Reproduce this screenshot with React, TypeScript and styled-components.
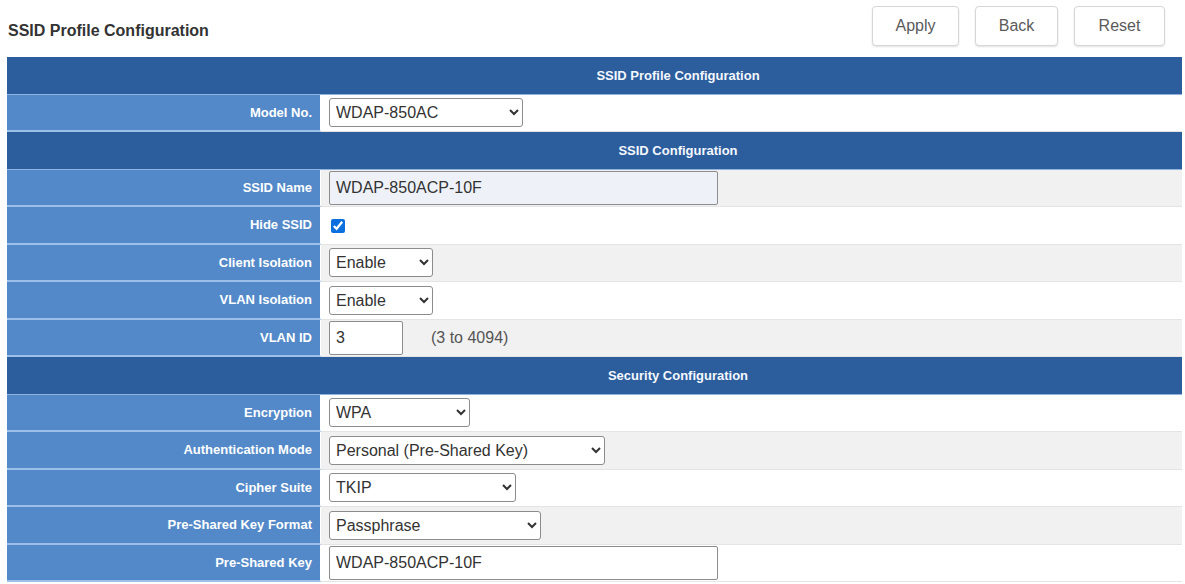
import styled, { createGlobalStyle } from "styled-components";

const GlobalStyle = createGlobalStyle`
    html, body {
        margin: 0;
        padding: 0;
        overflow: hidden;
        background: #ffffff;
    }
    body {
        font-family: "Liberation Sans", Arial, sans-serif;
    }
`

const Page = styled.div`
    padding-left: 7px;
    width: 1175px;
`

const TopBar = styled.div`
    display: flex;
    justify-content: space-between;
    align-items: flex-start;
    width: 1158px;
    height: 57px;
    box-sizing: border-box;
    padding-top: 6px;
`

const Title = styled.h1`
    margin: 16px 0 0 1px;
    font-size: 16px;
    font-weight: bold;
    color: #333333;
`

const Buttons = styled.div`
    display: flex;
    gap: 16px;
`

const Button = styled.button<{ $w: number }>`
    width: ${p => p.$w}px;
    height: 40px;
    background: #ffffff;
    border: 1px solid #d6d6d6;
    border-radius: 4px;
    box-shadow: 0 1px 2px rgba(0, 0, 0, 0.12);
    font-family: "Liberation Sans", Arial, sans-serif;
    font-size: 16px;
    color: #5a5a5a;
    cursor: pointer;
`

const Table = styled.table`
    width: 1175px;
    border-collapse: separate;
    border-spacing: 0;
    table-layout: fixed;
`

/* the heading text sits right of centre in the original page */
const HeadCell = styled.td`
    height: 37.5px;
    box-sizing: border-box;
    background: #2c5d9c;
    border-bottom: 1px solid #8fb2df;
    padding-left: 168px;
    color: #f4f8ff;
    font-size: 13px;
    font-weight: bold;
    text-align: center;
`

const LabelCell = styled.td`
    height: 37.5px;
    box-sizing: border-box;
    background: #5389c9;
    border-bottom: 2px solid #9cc0ea;
    border-right: 1px solid #ffffff;
    padding-right: 8px;
    color: #ffffff;
    font-size: 13px;
    font-weight: bold;
    text-align: right;
    white-space: nowrap;
`

const ValueCell = styled.td<{ $alt: boolean }>`
    height: 37.5px;
    box-sizing: border-box;
    background: ${p => (p.$alt ? "#f1f1f1" : "#ffffff")};
    border-bottom: 1px solid #e4e4e4;
    padding: 0 8px;
`

const Select = styled.select<{ $w: number }>`
    width: ${p => p.$w}px;
    height: 29px;
    border: 1px solid #8c8c8c;
    border-radius: 3px;
    background: #ffffff;
    padding: 0 2px;
    font-family: "Liberation Sans", Arial, sans-serif;
    font-size: 16px;
    color: #333333;
    vertical-align: middle;
`

const TextInput = styled.input<{ $w: number; $tint?: boolean }>`
    width: ${p => p.$w}px;
    height: 34px;
    box-sizing: border-box;
    border: 1px solid #8c8c8c;
    border-radius: 2px;
    background: ${p => (p.$tint ? "#eef2f8" : "#ffffff")};
    padding: 0 6px;
    font-family: "Liberation Sans", Arial, sans-serif;
    font-size: 16px;
    color: #333333;
    vertical-align: middle;
`

const Check = styled.input`
    width: 14px;
    height: 14px;
    margin: 0 0 0 2px;
    vertical-align: middle;
    accent-color: #0b6fde;
`

const Hint = styled.span`
    margin-left: 28px;
    font-size: 16px;
    color: #555555;
    vertical-align: middle;
`

type Row = { label: string; field: React.ReactNode };
type Section = { title: string; rows: Row[] };

const sel = (w: number, value: string) => (
    <Select $w={w} defaultValue={value}>
        <option>{value}</option>
    </Select>
);

const sections: Section[] = [
    {
        title: "SSID Profile Configuration",
        rows: [{ label: "Model No.", field: sel(194, "WDAP-850AC") }],
    },
    {
        title: "SSID Configuration",
        rows: [
            { label: "SSID Name", field: <TextInput $w={389} $tint defaultValue="WDAP-850ACP-10F" /> },
            { label: "Hide SSID", field: <Check type="checkbox" defaultChecked /> },
            { label: "Client Isolation", field: sel(104, "Enable") },
            { label: "VLAN Isolation", field: sel(104, "Enable") },
            {
                label: "VLAN ID",
                field: (
                    <>
                        <TextInput $w={74} defaultValue="3" />
                        <Hint>(3 to 4094)</Hint>
                    </>
                ),
            },
        ],
    },
    {
        title: "Security Configuration",
        rows: [
            { label: "Encryption", field: sel(141, "WPA") },
            { label: "Authentication Mode", field: sel(276, "Personal (Pre-Shared Key)") },
            { label: "Cipher Suite", field: sel(187, "TKIP") },
            { label: "Pre-Shared Key Format", field: sel(212, "Passphrase") },
            { label: "Pre-Shared Key", field: <TextInput $w={389} defaultValue="WDAP-850ACP-10F" /> },
        ],
    },
];

const App = () => {
    let index = 0;
    return (
        <Page>
            <GlobalStyle/>
            <TopBar>
                <Title>SSID Profile Configuration</Title>
                <Buttons>
                    <Button $w={87}>Apply</Button>
                    <Button $w={83}>Back</Button>
                    <Button $w={91}>Reset</Button>
                </Buttons>
            </TopBar>
            <Table>
                <colgroup>
                    <col style={{ width: 314 }}/>
                    <col/>
                </colgroup>
                <tbody>
                {sections.map(section => [
                    <tr key={section.title}>
                        <HeadCell colSpan={2}>{section.title}</HeadCell>
                    </tr>,
                    ...section.rows.map(row => {
                        index += 1;
                        return (
                            <tr key={row.label}>
                                <LabelCell>{row.label}</LabelCell>
                                <ValueCell $alt={index % 2 === 0}>{row.field}</ValueCell>
                            </tr>
                        );
                    }),
                ])}
                </tbody>
            </Table>
        </Page>
    );
};

export default App;
